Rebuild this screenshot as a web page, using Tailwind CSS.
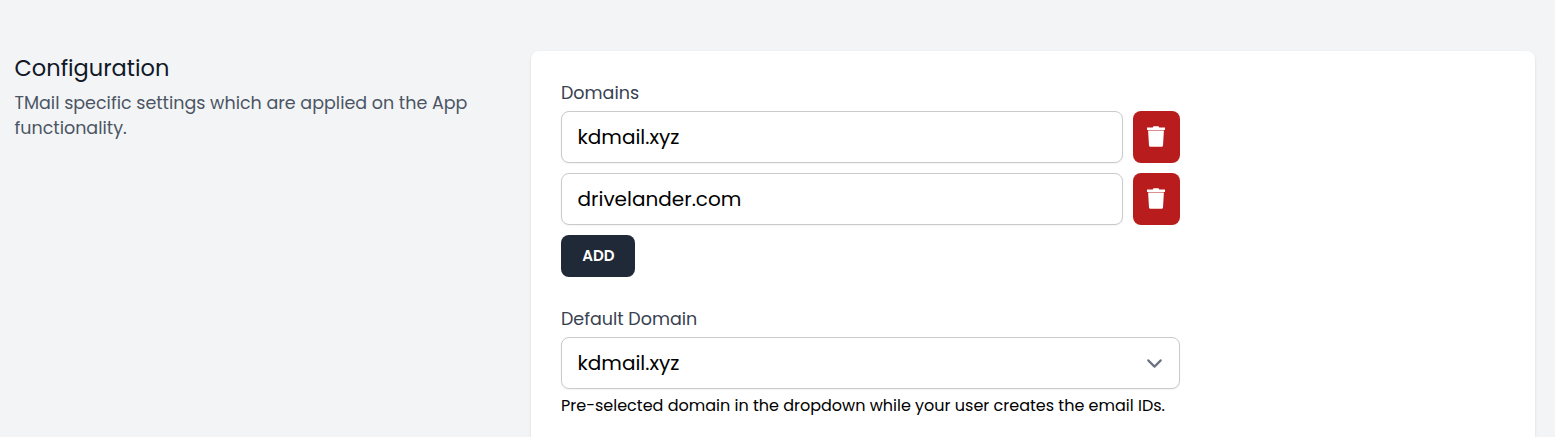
<!DOCTYPE html>
<html lang="en">
<head>
  <meta charset="UTF-8">
  <meta name="viewport" content="width=device-width, initial-scale=1">
  <title>Configuration</title>
  <script src="https://cdn.jsdelivr.net/npm/@tailwindcss/browser@4"></script>
</head>
<body class="bg-[#f3f4f6] font-[Poppins,Inter,sans-serif] h-screen overflow-hidden">
  <div class="flex h-screen pt-[51px] pl-[14.5px] pr-5">
    <!-- Section title -->
    <div class="w-[516.5px] shrink-0 pr-[30px]">
      <h3 class="mt-[2px] text-[22.5px] leading-[30px] text-[#111827]">Configuration</h3>
      <p class="mt-2 text-[17.5px] leading-[25px] text-[#4b5563]">TMail specific settings which are applied on the App<br>functionality.</p>
    </div>
    <!-- Form card -->
    <div class="flex-1 rounded-t-lg bg-white shadow-sm px-[30px] pt-[30px]">
      <div class="w-[619px]">
        <label class="block h-[30px] text-[17.5px] leading-[25px] text-[#374151]">Domains</label>
        <div class="flex gap-[10px]">
          <input type="text" value="kdmail.xyz" class="flex-1 h-[52px] rounded-lg border border-[#c9cacc] bg-white px-[15.5px] text-[20px] text-black shadow-xs">
          <button type="button" class="flex w-[47px] h-[52px] items-center justify-center rounded-lg bg-[#b91c1c] pr-px text-white">
            <svg class="w-5 h-6" viewBox="0 0 20 24" fill="currentColor"><path d="M6.8 2.5 7.4 1.2h5.2l.6 1.3H19v2.6H1V2.5zM2.1 5.6h15.8L17 20.5q-.1 1.2-1.4 1.2H4.4Q3.1 21.7 3 20.5z"/></svg>
          </button>
        </div>
        <div class="mt-[10px] flex gap-[10px]">
          <input type="text" value="drivelander.com" class="flex-1 h-[52px] rounded-lg border border-[#c9cacc] bg-white px-[15.5px] text-[20px] text-black shadow-xs">
          <button type="button" class="flex w-[47px] h-[52px] items-center justify-center rounded-lg bg-[#b91c1c] pr-px text-white">
            <svg class="w-5 h-6" viewBox="0 0 20 24" fill="currentColor"><path d="M6.8 2.5 7.4 1.2h5.2l.6 1.3H19v2.6H1V2.5zM2.1 5.6h15.8L17 20.5q-.1 1.2-1.4 1.2H4.4Q3.1 21.7 3 20.5z"/></svg>
          </button>
        </div>
        <button type="button" class="mt-[10px] flex w-[74px] h-[42px] items-center justify-center rounded-lg bg-[#1f2937] pl-px text-[15px] font-semibold text-white">ADD</button>
        <label class="mt-[30px] block h-[30px] text-[17.5px] leading-[25px] text-[#374151]">Default Domain</label>
        <div class="flex h-[52px] items-center justify-between rounded-lg border border-[#c9cacc] bg-white pl-[15.5px] pr-[12.5px] text-[20px] text-black shadow-xs">
          <span>kdmail.xyz</span>
          <svg class="w-[25px] h-[25px] text-[#6b7280]" viewBox="0 0 20 20" fill="none" stroke="currentColor" stroke-width="1.7" stroke-linecap="round" stroke-linejoin="round"><path d="m5 7.5 5 5 5-5"/></svg>
        </div>
        <p class="mt-[7px] text-[16px] leading-[20px] text-black whitespace-nowrap">Pre-selected domain in the dropdown while your user creates the email IDs.</p>
      </div>
    </div>
  </div>
</body>
</html>
